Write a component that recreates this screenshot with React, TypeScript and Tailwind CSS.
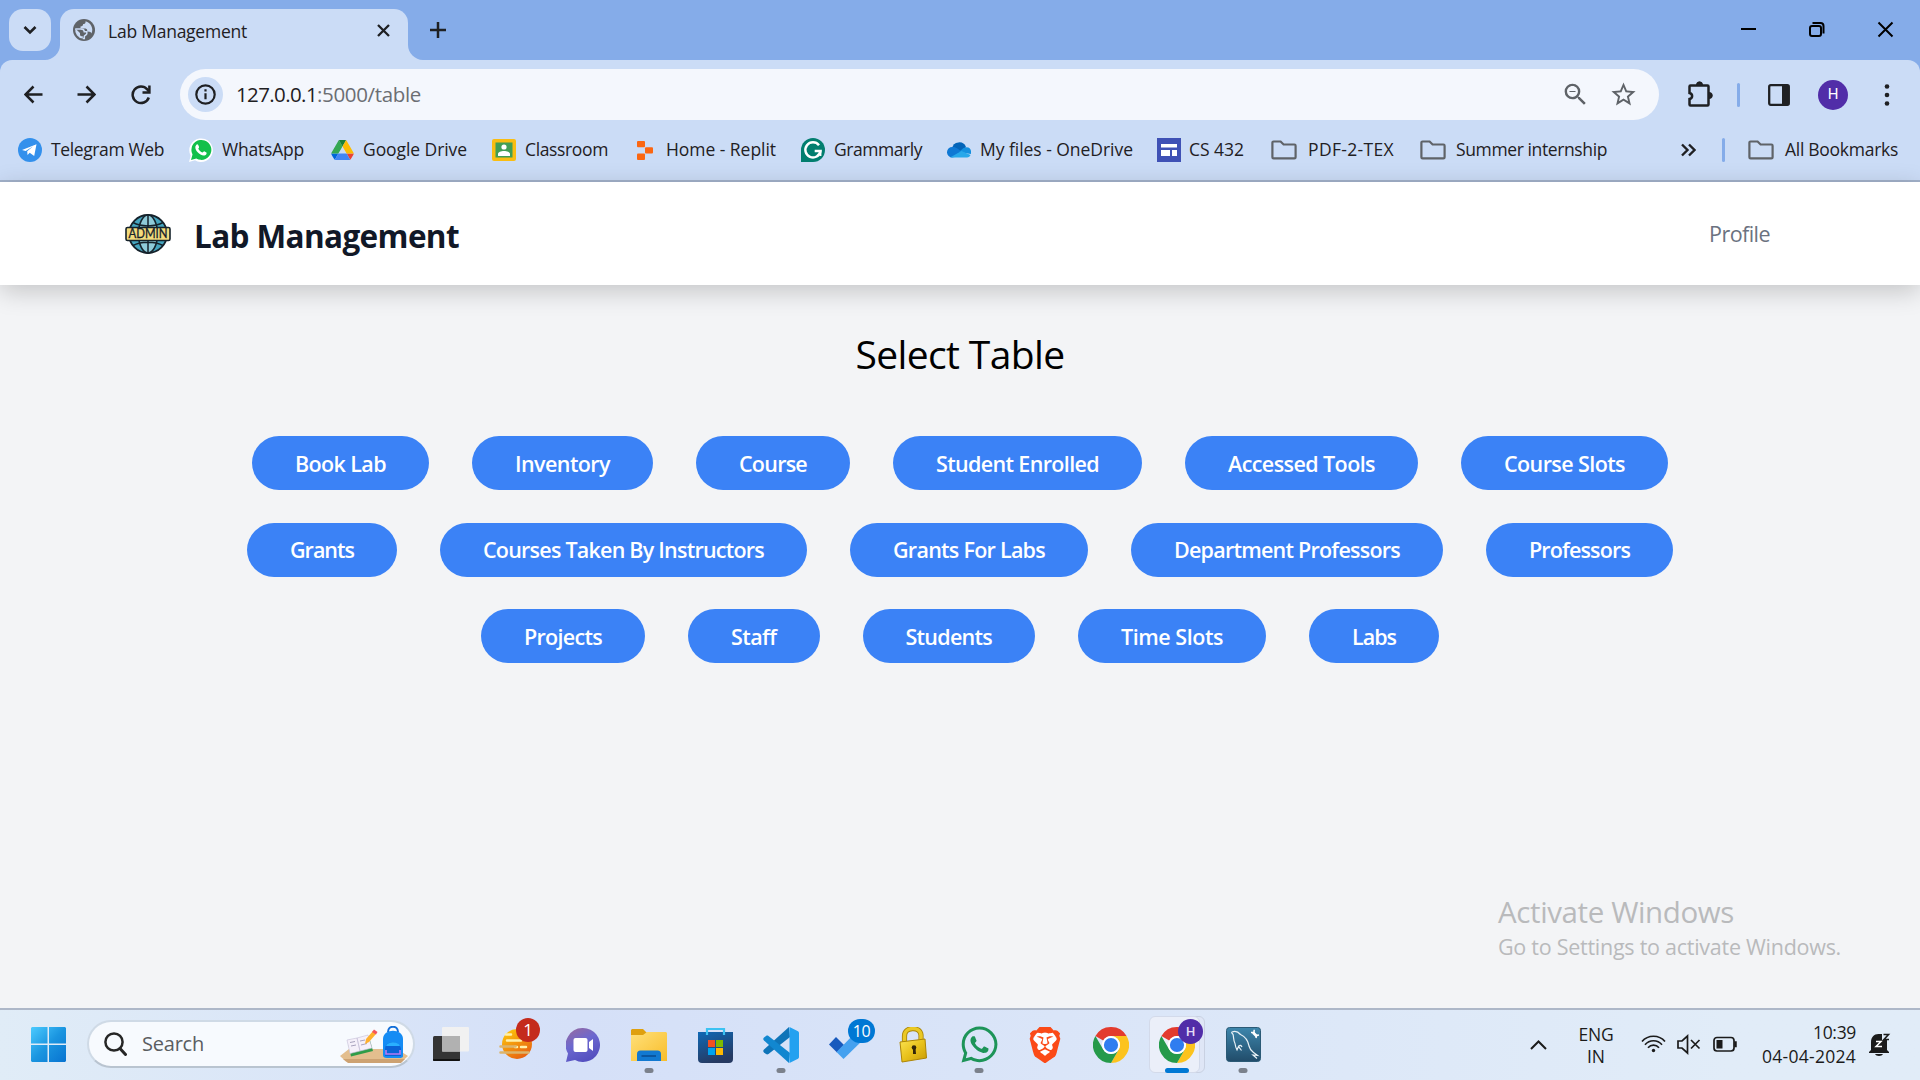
import { useLayoutEffect, useRef, useState, type ReactNode } from "react";
import { MdStarOutline, MdZoomOut } from "react-icons/md";
import { SiBrave } from "react-icons/si";
import { FaWhatsapp } from "react-icons/fa";

/** A line of text whose letter spacing is adjusted so that it fills `w` pixels. */
function Fit({ w, children, className = "" }: { w: number; children: string; className?: string }) {
  const ref = useRef<HTMLSpanElement>(null);
  const [spacing, setSpacing] = useState(0);
  useLayoutEffect(() => {
    const el = ref.current;
    if (!el) return;
    setSpacing((w - el.getBoundingClientRect().width) / children.length);
  }, [w, children]);
  return (
    <span ref={ref} className={"inline-block shrink-0 whitespace-pre " + className} style={{ letterSpacing: spacing }}>
      {children}
    </span>
  );
}

/* ---------- browser chrome ---------- */

const Globe = () => (
  <svg className="ml-[13px]" width="22" height="22" viewBox="0 0 22 22">
    <circle cx="11" cy="11" r="11" fill="#5f6368" />
    <path d="M12.500 2.300c.3 1.700-.7 2.700-2.300 2.700-.4 2-1.200 2.300-2.700 2.500v2h5c1.700.3 1.800 1.500 1.800 3l2.200.2c1 .2 1.500.8 2 1.700a8.800 8.800 0 0 0-6-12.100z" fill="#cbdcf6" />
    <path d="M2.300 9.500L7 14v1.500c0 1.500 1.300 1.800 2.800 1.800v2.300A8.800 8.800 0 0 1 2.300 9.500z" fill="#cbdcf6" />
    <path d="M2.300 10h5.500c2 0 3.500.7 3.500 2.700h2.500v2c-.5 1.700-2 1.300-2.500 2.600v2.300H9.800" fill="none" stroke="#cbdcf6" strokeWidth="1.500" />
  </svg>
);

function TabStrip() {
  return (
    <div className="flex h-[60px] bg-[#85ace9]">
      <div className="mt-[9px] ml-[9px] flex h-[42px] w-[42px] items-center justify-center rounded-[14px] bg-[#cbdcf6]">
        <svg width="14" height="10" viewBox="0 0 14 10" fill="none" stroke="#1f2023" strokeWidth="2.6">
          <path d="M1.500 2l5.500 5.500L12.500 2" />
        </svg>
      </div>
      <div className="relative mt-[9px] ml-[9px] flex h-[51px] w-[348px] items-center rounded-t-[14px] bg-[#cbdcf6] pb-[9px]">
        <svg className="absolute bottom-0 -left-[15px]" width="15" height="15" viewBox="0 0 15 15" fill="#cbdcf6">
          <path d="M15 0v15H0C8 15 15 8 15 0z" />
        </svg>
        <svg className="absolute -right-[15px] bottom-0" width="15" height="15" viewBox="0 0 15 15" fill="#cbdcf6">
          <path d="M0 0v15h15C7 15 0 8 0 0z" />
        </svg>
        <Globe />
        <Fit w={139} className="mt-[3px] ml-[13px] text-[17.500px] text-[#1f2023]">Lab Management</Fit>
        <svg className="ml-[130px]" width="13" height="13" viewBox="0 0 13 13" fill="none" stroke="#1f2023" strokeWidth="2.300">
          <path d="M1 1l11 11M12 1L1 12" />
        </svg>
      </div>
      <svg className="mt-[22px] ml-[22px]" width="16" height="16" viewBox="0 0 16 16" fill="none" stroke="#1f2023" strokeWidth="2.500">
        <path d="M8 0v16M0 8h16" />
      </svg>
      <svg className="mt-[20px] ml-auto" width="154" height="20" viewBox="0 0 154 20" fill="none" stroke="#000" strokeWidth="2">
        <path d="M1 9h15" />
        <rect x="70" y="6" width="11" height="10" rx="2" />
        <path d="M72.500 3h8a3 3 0 0 1 3 3v7.500" />
        <path d="M138.500 2.500l14 14M152.500 2.500l-14 14" />
      </svg>
      <div className="w-[26px]" />
    </div>
  );
}

function Toolbar() {
  return (
    <div className="flex h-[69px] items-center bg-[#cbdcf6]">
      <svg className="ml-[24px]" width="19" height="19" viewBox="0 0 19 19" fill="none" stroke="#1f2023" strokeWidth="2.500">
        <path d="M18.500 9.500H2M9.500 1.500l-8 8 8 8" />
      </svg>
      <svg className="ml-[34px]" width="19" height="19" viewBox="0 0 19 19" fill="none" stroke="#1f2023" strokeWidth="2.500">
        <path d="M.5 9.500H17M9.500 1.500l8 8-8 8" />
      </svg>
      <svg className="ml-[35px]" width="20" height="20" viewBox="0 0 20 20" fill="none" stroke="#1f2023" strokeWidth="2.500">
        <path d="M17.800 12.500A8.300 8.300 0 1 1 16.300 4.400L18 6.500" />
        <path d="M18.400 .5v7H11.500" />
      </svg>
      <div className="ml-[29px] flex h-[51px] w-[1479px] items-center rounded-full bg-[#f4f7fd]">
        <div className="ml-[8px] flex h-[35px] w-[35px] items-center justify-center rounded-full bg-[#cbdcf6]">
          <svg width="21" height="21" viewBox="0 0 21 21" fill="none" stroke="#1f2023" strokeWidth="2.200">
            <circle cx="10.500" cy="10.500" r="9.200" />
            <path d="M10.500 9.200v6M10.500 5.200v2.300" />
          </svg>
        </div>
        <Fit w={81} className="ml-[13px] text-[20.500px] text-[#1f2023]">127.0.0.1</Fit>
        <Fit w={104} className="text-[20.500px] text-[#6b6e73]">:5000/table</Fit>
        <MdZoomOut size={29} color="#5f6368" className="ml-auto" />
        <MdStarOutline size={29} color="#5f6368" className="mr-[21px] ml-[19px]" />
      </div>
      <svg className="ml-[28px]" width="27" height="27" viewBox="0 0 27 27" fill="none" stroke="#1f2023" strokeWidth="2.500">
        <path d="M3.500 4.500h17a1 1 0 0 1 1 1v18a1 1 0 0 1-1 1h-17a1 1 0 0 1-1-1v-5.500c3.500-.8 3.500-5.200 0-6V5.500a1 1 0 0 1 1-1z" />
        <path d="M9.500 3.800a3 3 0 0 1 6 0zM22.300 11.500a3 3 0 0 1 0 6z" fill="#1f2023" strokeWidth="1" />
      </svg>
      <div className="ml-[23px] h-[24px] w-[3px] rounded bg-[#85ace9]" />
      <svg className="ml-[28px]" width="22" height="22" viewBox="0 0 22 22" fill="none" stroke="#1f2023" strokeWidth="2.300">
        <rect x="1.200" y="1.200" width="19.600" height="19.600" rx="1.500" />
        <path d="M14 1h7v20h-7z" fill="#1f2023" stroke="none" />
      </svg>
      <div className="ml-[28px] flex h-[30px] w-[30px] items-center justify-center rounded-full bg-[#512da8] font-[Roboto] text-[15px] text-white">H</div>
      <svg className="ml-[36px]" width="6" height="22" viewBox="0 0 6 22" fill="#1f2023">
        <circle cx="3" cy="2.500" r="2.300" />
        <circle cx="3" cy="11" r="2.300" />
        <circle cx="3" cy="19.500" r="2.300" />
      </svg>
    </div>
  );
}

const Folder = () => (
  <svg width="26" height="20" viewBox="0 0 26 20" fill="none" stroke="#5f6368" strokeWidth="2.200">
    <path d="M2.600 1.500h7l3 3h10.800a1.200 1.200 0 0 1 1.200 1.200v11.500a1.200 1.200 0 0 1-1.200 1.200H2.600a1.200 1.200 0 0 1-1.200-1.200V2.700a1.200 1.200 0 0 1 1.200-1.200z" />
  </svg>
);

const Telegram = () => (
  <svg width="24" height="24" viewBox="0 0 24 24">
    <circle cx="12" cy="12" r="12" fill="#3390ec" />
    <path d="M4 12L18.500 6.200 16.200 18l-4.500-3.200-2.200 2.200-.3-3.800 6-5-7.500 4.700z" fill="#fff" />
  </svg>
);

const WhatsAppSmall = () => (
  <svg width="24" height="24" viewBox="0 0 24 24">
    <path d="M0 24l1.700-6.200A11.800 11.800 0 1 1 6 22.300z" fill="#fff" />
    <path d="M2 22l1.500-5.500A10 10 0 1 1 7.300 20.500z" fill="#12c04b" />
    <path d="M7.200 7c.6-1 1.500-1 1.900-.2l1 2.300c.1.500-.8 1.400-.8 1.700.9 1.900 2.300 3 4.200 3.800.5 0 1.200-1.500 1.700-1.300l2.200 1.100c.6.500-.1 2.300-1.200 2.800-4.300 1.600-10.700-4.500-9.800-8.600z" fill="#fff" />
  </svg>
);

const Drive = () => (
  <svg width="23" height="20" viewBox="0 0 87.300 78">
    <path d="M6.600 66.850l3.850 6.650c.8 1.400 1.950 2.500 3.300 3.300L27.500 53H0c0 1.550.4 3.100 1.200 4.500z" fill="#0066da" />
    <path d="M43.650 25L29.900 1.200c-1.350.8-2.500 1.900-3.300 3.300L1.200 48.500A9 9 0 0 0 0 53h27.500z" fill="#34a853" />
    <path d="M73.550 76.800c1.350-.8 2.500-1.900 3.300-3.300l9.250-16a9 9 0 0 0 1.200-4.500H59.800z" fill="#ea4335" />
    <path d="M43.650 25L57.400 1.200C56.050.4 54.500 0 52.900 0H34.400c-1.600 0-3.150.45-4.500 1.200z" fill="#188038" />
    <path d="M59.800 53H27.500L13.750 76.800c1.350.8 2.900 1.200 4.500 1.200h50.800c1.600 0 3.150-.45 4.500-1.200z" fill="#4285f4" />
    <path d="M73.400 26.500l-12.700-22c-.8-1.400-1.950-2.500-3.300-3.300L43.650 25l16.150 28h27.450c0-1.550-.4-3.100-1.200-4.500z" fill="#fbbc04" />
  </svg>
);

const Classroom = () => (
  <svg width="24" height="22" viewBox="0 0 24 22">
    <rect width="24" height="22" rx="2" fill="#f9bd12" />
    <rect x="3.500" y="3.500" width="17" height="15" fill="#419e55" />
    <circle cx="12" cy="8" r="2.600" fill="#fff" />
    <path d="M6 17v-2c0-4 12-4 12 0v2z" fill="#fff" />
  </svg>
);

const Replit = () => (
  <svg width="16" height="19" viewBox="0 0 16 19" fill="#fb6611">
    <rect width="8" height="6.300" rx="1" />
    <rect x="8" y="6.300" width="8" height="6.300" rx="1" />
    <rect y="12.600" width="8" height="6.300" rx="1" />
  </svg>
);

const Grammarly = () => (
  <svg width="24" height="24" viewBox="0 0 24 24" fill="none">
    <path d="M12 0a12 12 0 0 1 0 24H0V12A12 12 0 0 1 12 0z" fill="#027e6f" />
    <path d="M18 7.200A7.600 7.600 0 1 0 19.500 13h-5.800" stroke="#fff" strokeWidth="2.500" />
    <path d="M19.500 13v5" stroke="#fff" strokeWidth="1.800" />
  </svg>
);

const OneDrive = () => (
  <svg width="24" height="16" viewBox="0 0 24 16">
    <path d="M5 6.500A7.300 7.300 0 0 1 19 5l-5 6z" fill="#0364b8" />
    <path d="M5 15.500A5 5 0 0 1 5.500 5c3-.5 5 1.500 14 8z" fill="#0f78d4" />
    <path d="M12 10l4.500-4c6-2.500 8.500 2 7.300 6z" fill="#1490df" />
    <path d="M3 15.500L14.500 9 23.500 13c-.6 1.600-1.800 2.500-3.500 2.500z" fill="#28a8ea" />
  </svg>
);

const Sites = () => (
  <svg width="24" height="24" viewBox="0 0 24 24">
    <path d="M0 0h24v24H0z" fill="#3f51b5" />
    <path d="M4 6h16v3.500H4zM4 12h9v6H4zM15 12h5v6h-5z" fill="#fff" />
  </svg>
);

const BOOKMARKS: { icon: ReactNode; label: string; width: number; gap: string; before: string }[] = [
  { icon: <Telegram />, label: "Telegram Web", width: 113, gap: "ml-[9px]", before: "ml-[18px]" },
  { icon: <WhatsAppSmall />, label: "WhatsApp", width: 82, gap: "ml-[9px]", before: "ml-[25px]" },
  { icon: <Drive />, label: "Google Drive", width: 104, gap: "ml-[9px]", before: "ml-[27px]" },
  { icon: <Classroom />, label: "Classroom", width: 83, gap: "ml-[9px]", before: "ml-[25px]" },
  { icon: <Replit />, label: "Home - Replit", width: 110, gap: "ml-[13px]", before: "ml-[29px]" },
  { icon: <Grammarly />, label: "Grammarly", width: 88, gap: "ml-[9px]", before: "ml-[25px]" },
  { icon: <OneDrive />, label: "My files - OneDrive", width: 153, gap: "ml-[9px]", before: "ml-[25px]" },
  { icon: <Sites />, label: "CS 432", width: 55, gap: "ml-[8px]", before: "ml-[24px]" },
  { icon: <Folder />, label: "PDF-2-TEX", width: 86, gap: "ml-[11px]", before: "ml-[27px]" },
  { icon: <Folder />, label: "Summer internship", width: 151, gap: "ml-[10px]", before: "ml-[26px]" },
];

function Bookmarks() {
  return (
    <div className="flex h-[53px] items-center border-b-2 border-[#a3b2cb] bg-[#cbdcf6] pb-[9px] text-[17.500px] text-[#1f2023]">
      {BOOKMARKS.map((b) => (
        <div key={b.label} className={"flex items-center " + b.before}>
          {b.icon}
          <Fit w={b.width} className={"-mt-px " + b.gap}>{b.label}</Fit>
        </div>
      ))}
      <svg className="ml-auto" width="15" height="14" viewBox="0 0 15 14" fill="none" stroke="#1f2023" strokeWidth="2.400">
        <path d="M1 1.500L6.500 7 1 12.500M8 1.500L13.500 7 8 12.500" />
      </svg>
      <div className="ml-[26px] h-[24px] w-[3px] rounded bg-[#85ace9]" />
      <div className="mr-[22px] ml-[23px] flex items-center">
        <Folder />
        <Fit w={113} className="-mt-px ml-[11px]">All Bookmarks</Fit>
      </div>
    </div>
  );
}

/* ---------- page ---------- */

const AdminGlobe = () => (
  <svg width="46" height="42" viewBox="0 0 46 42" fill="none" stroke="#15222b">
    <circle cx="23" cy="21" r="19" fill="#45a5bf" strokeWidth="1.800" />
    <ellipse cx="23" cy="21" rx="9.500" ry="19" fill="#8fcbd9" strokeWidth="1.600" />
    <path d="M23 2v38M8 9.500c8 4.500 22 4.500 30 0M8 32.500c8-4.500 22-4.500 30 0" strokeWidth="1.500" />
    <rect x="1" y="14.500" width="44" height="13" rx="1.500" fill="#f3dc7c" strokeWidth="1.600" />
    <text x="3.500" y="25.300" textLength="39" lengthAdjust="spacingAndGlyphs" fontFamily="Lato, sans-serif" fontSize="12.500" fontWeight="400" fill="#15222b" stroke="#15222b" strokeWidth=".3">ADMIN</text>
  </svg>
);

const ROWS: { label: string; width: number }[][] = [
  [
    { label: "Book Lab", width: 91 },
    { label: "Inventory", width: 95 },
    { label: "Course", width: 68 },
    { label: "Student Enrolled", width: 163 },
    { label: "Accessed Tools", width: 147 },
    { label: "Course Slots", width: 121 },
  ],
  [
    { label: "Grants", width: 64 },
    { label: "Courses Taken By Instructors", width: 281 },
    { label: "Grants For Labs", width: 152 },
    { label: "Department Professors", width: 226 },
    { label: "Professors", width: 101 },
  ],
  [
    { label: "Projects", width: 78 },
    { label: "Staff", width: 45.5 },
    { label: "Students", width: 86.5 },
    { label: "Time Slots", width: 102 },
    { label: "Labs", width: 44 },
  ],
];

function Page() {
  return (
    <main className="relative flex h-[826px] flex-col bg-[#f3f4f6]">
      <header className="flex h-[103px] items-center bg-white pr-[150px] pl-[125px] shadow-[0_6px_24px_rgba(0,0,0,0.2)]">
        <AdminGlobe />
        <Fit w={265} className="mt-[4px] ml-[23px] text-[31.500px] font-bold text-[#111827]">Lab Management</Fit>
        <Fit w={61} className="mt-[2px] ml-auto text-[21.500px] text-[#6b7280]">Profile</Fit>
      </header>
      <h1 className="mt-[39px] flex h-[60px] items-center justify-center text-[39px] text-black">
        <Fit w={209}>Select Table</Fit>
      </h1>
      <div className="mt-[52px] flex flex-col gap-[32.500px]">
        {ROWS.map((row, i) => (
          <div key={i} className="flex justify-center gap-[43px]">
            {row.map((b) => (
              <button key={b.label} className="flex h-[54px] items-center rounded-full bg-[#3b82f6] px-[43px] pt-[2px] text-[21.500px] font-semibold text-white">
                <Fit w={b.width}>{b.label}</Fit>
              </button>
            ))}
          </div>
        ))}
      </div>
      <aside className="absolute top-[708px] left-[1498px] flex flex-col items-start text-[#b9babc]">
        <Fit w={236} className="text-[29.500px] leading-[44px]">Activate Windows</Fit>
        <Fit w={343} className="text-[21.500px] leading-[26px]">Go to Settings to activate Windows.</Fit>
      </aside>
    </main>
  );
}

/* ---------- taskbar ---------- */

const WindowsLogo = () => (
  <svg width="35" height="35" viewBox="0 0 35 35">
    <defs>
      <linearGradient id="win" x1="0" y1="0" x2="1" y2="1" gradientUnits="objectBoundingBox">
        <stop offset="0" stopColor="#4ccbff" />
        <stop offset=".5" stopColor="#1a95e0" />
        <stop offset="1" stopColor="#0873d0" />
      </linearGradient>
    </defs>
    <path d="M1 0h15.500v16.500H0V1zM18 0h16l1 1v15.500H18zM0 18h16.500v17H1l-1-1zM18 18h17v16l-1 1H18z" fill="url(#win)" />
  </svg>
);

const SearchArt = () => (
  <svg width="68" height="38" viewBox="0 0 68 38">
    <path d="M0 30l9-7h48l11 7-6 5.500H6z" fill="#e3be8e" />
    <path d="M3 33h62l-4 4H8z" fill="#cda272" />
    <path d="M8 16l21-5 4 14-22 5.500z" fill="#2f9c48" />
    <path d="M7 14l10-2 3 13-10 2.500zM17 12l11-3 4 13-12 3z" fill="#f5f0fa" stroke="#c5bed6" strokeWidth=".6" />
    <path d="M10 16.500l5-1M11 20l5-1M20 15l5-1M21 19l6-1.500" stroke="#a8a2bd" />
    <path d="M25 18l1-5 7-8 3 3-7 8z" fill="#ffb02e" />
    <path d="M32 6l2-2.500 3.500 2.500L36 8.500z" fill="#f4545d" />
    <path d="M48 6c0-7 10-7 10 0" fill="none" stroke="#146fd8" strokeWidth="2" />
    <path d="M43 13c0-11 20-11 20 0v17c0 2-3 2-4 2H47c-3 0-4-1-4-3z" fill="#158cf4" />
    <path d="M45 23c0-9 15-9 16 0v7H45z" fill="#0b63d6" />
    <path d="M46 20c2-5 12-5 14 0z" fill="#29b0ff" />
    <path d="M46 24v4h14v-4" fill="none" stroke="#b77bf3" strokeWidth="1.600" />
  </svg>
);

const TaskView = () => (
  <svg width="36" height="35" viewBox="0 0 36 35">
    <rect y="9" width="27" height="25" rx="1.500" fill="#343434" />
    <path d="M0 32h27v1.500l-1 .5H1l-1-.5z" fill="#111" />
    <rect x="9" width="27" height="24.500" rx="1" fill="#f1f1f1" />
    <path d="M9 9h18v15.500H9z" fill="#b1b1b1" />
  </svg>
);

const News = () => (
  <svg width="36" height="36" viewBox="0 0 36 36">
    <defs>
      <linearGradient id="sun" x1="0" y1="0" x2=".6" y2="1">
        <stop offset="0" stopColor="#ffcf0a" />
        <stop offset="1" stopColor="#e86410" />
      </linearGradient>
    </defs>
    <circle cx="18" cy="17" r="15" fill="url(#sun)" />
    <path d="M7 7.500h5M8 13.500h14M16 20h2M22 20h5" stroke="#fff0a8" strokeWidth="2.500" strokeLinecap="round" />
    <path d="M1.500 19.500h15M1.500 25.500h28" stroke="#dcb46b" strokeWidth="2.500" strokeLinecap="round" />
  </svg>
);

const Chat = () => (
  <svg width="34" height="34" viewBox="0 0 34 34">
    <defs>
      <linearGradient id="chat" x1="0" y1="0" x2=".5" y2="1">
        <stop offset="0" stopColor="#9a6a9c" />
        <stop offset=".5" stopColor="#6c68cf" />
        <stop offset="1" stopColor="#5550c0" />
      </linearGradient>
    </defs>
    <path d="M17 0a17 17 0 1 1-8 32L0 34l2-8.500A17 17 0 0 1 17 0z" fill="url(#chat)" />
    <rect x="7.500" y="10" width="14" height="14" rx="2" fill="#fff" />
    <path d="M23 14l4-3v12l-4-3z" fill="#fff" />
  </svg>
);

const Explorer = () => (
  <svg width="36" height="34" viewBox="0 0 36 34">
    <defs>
      <linearGradient id="fold" x1="0" y1="0" x2="1" y2="1">
        <stop offset="0" stopColor="#ffe07a" />
        <stop offset="1" stopColor="#f8bd2a" />
      </linearGradient>
    </defs>
    <path d="M0 2l1-1h11l4 4-3 4H0z" fill="#dfa00f" />
    <path d="M0 7h12l4-3h19l1 1v28H0z" fill="url(#fold)" />
    <path d="M6 33v-7a3.500 3.500 0 0 1 3.500-3.500h17A3.500 3.500 0 0 1 30 26v7z" fill="#1279d1" />
    <path d="M10.500 28h14.500" stroke="#0a56a0" strokeWidth="2" />
  </svg>
);

const Store = () => (
  <svg width="35" height="36" viewBox="0 0 35 36">
    <defs>
      <linearGradient id="store" x1="0" y1="0" x2=".4" y2="1">
        <stop offset="0" stopColor="#0f69b6" />
        <stop offset="1" stopColor="#263a62" />
      </linearGradient>
    </defs>
    <path d="M0 5h35v27a4 4 0 0 1-4 4H4a4 4 0 0 1-4-4z" fill="url(#store)" />
    <path d="M9 8V2h17v6" fill="none" stroke="#3cc2f2" strokeWidth="2.200" />
    <path d="M10 13h7v7h-7z" fill="#f25022" />
    <path d="M18 13h7v7h-7z" fill="#7fba00" />
    <path d="M10 21h7v7h-7z" fill="#00a4ef" />
    <path d="M18 21h7v7h-7z" fill="#ffb900" />
  </svg>
);

const VSCode = () => (
  <svg width="36" height="36" viewBox="0 0 36 36">
    <path d="M26 0L1 22.500c-1 1-1 2 0 3L3 27c1 .6 1.500.5 2.500 0L27 10z" fill="#0f74b8" />
    <path d="M26 36L1 13.500c-1-1-1-2 0-3L3 9c1-.6 1.500-.5 2.500 0L27 26z" fill="#1287d0" />
    <path d="M26.500 0L35 4.200c.7.400 1 .9 1 1.700v24.200c0 .8-.3 1.300-1 1.700L26.500 36z" fill="#23a1f0" />
  </svg>
);

const Todo = () => (
  <svg width="36" height="36" viewBox="0 0 36 36">
    <path d="M0 17.500l7-7.500 8 8-7 7.500z" fill="#185abd" />
    <path d="M7.500 25L28 4l8 7-21.500 21z" fill="#45a1ef" />
  </svg>
);

const Lock = () => (
  <svg width="28" height="36" viewBox="0 0 28 36">
    <defs>
      <linearGradient id="gold" x1="0" y1="0" x2="1" y2="1">
        <stop offset="0" stopColor="#fbe453" />
        <stop offset=".5" stopColor="#e9c21b" />
        <stop offset="1" stopColor="#c79a05" />
      </linearGradient>
    </defs>
    <path d="M5.500 16V9c0-9.500 15.500-10 16.500-1v7" fill="none" stroke="#a98408" strokeWidth="5.200" />
    <path d="M5.500 16V9c0-9.500 15.500-10 16.500-1v7" fill="none" stroke="#eac824" strokeWidth="3.500" />
    <path d="M1 15l25-3 1.500 19L3 35z" fill="url(#gold)" stroke="#ad8505" />
    <circle cx="15" cy="20.500" r="2.300" fill="#33270a" />
    <path d="M14 21h2.500l.5 6h-3z" fill="#33270a" />
  </svg>
);

const Brave = () => (
  <span className="relative block h-[36px] w-[36px]">
    <svg className="absolute inset-0" width="36" height="36" viewBox="0 0 36 36">
      <path d="M9 6h18l3 8-3 13-9 6-9-6-3-13z" fill="#fff" />
    </svg>
    <SiBrave size={36} color="#fb4a17" className="absolute inset-0" />
  </span>
);

const Chrome = () => (
  <svg width="36" height="36" viewBox="0 0 36 36">
    <path d="M2.410 9A18 18 0 0 1 33.590 9H18a9 9 0 0 0-7.800 4.500z" fill="#e33b2e" />
    <path d="M33.590 9A18 18 0 0 1 18 36l7.800-13.500A9 9 0 0 0 18 9z" fill="#fcc31e" />
    <path d="M18 36A18 18 0 0 1 2.410 9l7.800 13.500A9 9 0 0 0 25.800 22.500z" fill="#259a4a" />
    <circle cx="18" cy="18" r="9" fill="#fff" />
    <circle cx="18" cy="18" r="7.100" fill="#2f7df0" />
  </svg>
);

const Workbench = () => (
  <svg width="35" height="35" viewBox="0 0 35 35" fill="none">
    <defs>
      <linearGradient id="wb" x1="0" y1="0" x2="0" y2="1">
        <stop offset="0" stopColor="#3d86ac" />
        <stop offset="1" stopColor="#214c6a" />
      </linearGradient>
    </defs>
    <rect x=".5" y=".5" width="34" height="34" rx="3" fill="url(#wb)" stroke="#2b5a76" />
    <path d="M6 5c3-1.500 6-.5 8.500 2.500 4.500 2 7.500 6 8.500 11.500.7 3 2.500 5 4.500 6.500l4 3-4.500-.5 4 3.500" stroke="#e8f1f6" strokeWidth="1.200" />
    <path d="M6 5c-1 .8.800 1.500 1.200 3 .5 3 .3 6 1.800 8.500.3 2 .8 4.500 2 6.500l1.500-3.500 3 4M13 19c1-1 2-1 3 1" stroke="#e8f1f6" strokeWidth="1.200" />
    <path d="M27 5.500l4 4" stroke="#fff" strokeWidth="2.600" />
    <path d="M25 5.500l3-.2.200-2.500M30 11l.5-2.500 2.500-.5" stroke="#fff" strokeWidth="1.500" />
  </svg>
);

function Dot() {
  return <span className="absolute bottom-[7px] left-1/2 h-[5px] w-[9px] -translate-x-1/2 rounded-full bg-[#7b818c]" />;
}

function App({ children }: { children: ReactNode }) {
  return <div className="relative flex h-[70px] w-[66px] shrink-0 items-center justify-center pb-[1px]">{children}</div>;
}

function Taskbar() {
  return (
    <footer className="flex h-[72px] items-center border-t-2 border-[#adb7c8] bg-linear-to-r from-[#e0ecf7] from-0% via-[#d5e0f8] via-30% to-[#e1ecf8] to-90% text-[#1b1b1b]">
      <div className="ml-[31px] shrink-0 pb-[1px]">
        <WindowsLogo />
      </div>
      <div className="mb-[2px] ml-[21px] flex h-[48px] w-[328px] shrink-0 items-center rounded-full border-2 border-[#cfdae6] border-b-[#b9c4d0] bg-[#f7fafe] pl-[15px]">
        <svg width="23" height="24" viewBox="0 0 23 24" fill="none" stroke="#262626" strokeWidth="2.500">
          <circle cx="10" cy="10" r="8.600" />
          <path d="M16 16.500l5.500 6" strokeWidth="3" strokeLinecap="round" />
        </svg>
        <Fit w={62} className="ml-[15px] text-[20px] text-[#5a5d61]">Search</Fit>
        <div className="mt-[2px] mr-[5px] ml-auto">
          <SearchArt />
        </div>
      </div>
      <div className="ml-[3px] flex">
        <App><TaskView /></App>
        <App>
          <News />
          <span className="absolute top-[8px] left-[32px] flex h-[24px] w-[24px] items-center justify-center rounded-full bg-[#c42b1c] text-[17px] text-white">1</span>
        </App>
        <App><Chat /></App>
        <App><Explorer /><Dot /></App>
        <App><Store /></App>
        <App><VSCode /><Dot /></App>
        <App>
          <Todo />
          <span className="absolute top-[9px] left-[34px] flex h-[24px] w-[27px] items-center justify-center rounded-full bg-[#0078d4] text-[16px] tracking-tight text-white">10</span>
        </App>
        <App><Lock /></App>
        <App><FaWhatsapp size={41} color="#1d9458" /><Dot /></App>
        <App><Brave /></App>
        <App><Chrome /></App>
        <App>
          <span className="absolute top-[6px] left-[12px] h-[57px] w-[49px] rounded-[6px] border border-[#c9d1e2] bg-[#dfe6f6]" />
          <span className="absolute top-[6px] left-[5px] h-[57px] w-[51px] rounded-[6px] border border-[#d3daea] bg-[#ebeff9]" />
          <span className="relative"><Chrome /></span>
          <span className="absolute top-[9px] left-[34px] flex h-[25px] w-[25px] items-center justify-center rounded-full bg-[#512da8] font-[Roboto] text-[13px] font-medium text-[#e5dcf5]">H</span>
          <span className="absolute bottom-[7px] left-[21px] h-[5px] w-[24px] rounded-full bg-[#0078d4]" />
        </App>
        <App><Workbench /><Dot /></App>
      </div>
      <svg className="mr-[31px] ml-auto shrink-0" width="17" height="10" viewBox="0 0 17 10" fill="none" stroke="#1b1b1b" strokeWidth="2">
        <path d="M1 9l7.500-7.500L16 9" />
      </svg>
      <div className="flex w-[36px] flex-col items-center pb-[1px] text-[17.500px] leading-[22px]">
        <Fit w={35}>ENG</Fit>
        <Fit w={18}>IN</Fit>
      </div>
      <svg className="mb-[3px] ml-[27px] shrink-0" width="96" height="24" viewBox="0 0 96 24" fill="none" stroke="#1b1b1b" strokeWidth="1.700">
        <path d="M1 9.500c6-7 17-7 23 0" />
        <path d="M4 12.700c4.500-5.300 12.500-5.300 17 0" />
        <path d="M7 15.700c3-3.500 8-3.500 11 0" />
        <circle cx="12.500" cy="18.500" r="1.700" fill="#1b1b1b" stroke="none" />
        <path d="M37 9h4l5.500-5v17L41 16h-4zM50 8l8.500 8.500M58.500 8L50 16.500" />
        <rect x="73" y="5.500" width="20" height="13.500" rx="3" />
        <path d="M75.500 8h6v8.500h-6z" fill="#1b1b1b" stroke="none" />
        <path d="M94 10h1v4.500h-1z" strokeWidth="1.500" />
      </svg>
      <div className="ml-[25px] flex w-[94px] flex-col items-end pb-[3px] text-[17.500px] leading-[24px]">
        <Fit w={43}>10:39</Fit>
        <Fit w={94}>04-04-2024</Fit>
      </div>
      <svg className="mr-[29px] mb-[1px] ml-[13px] shrink-0" width="22" height="24" viewBox="0 0 22 24">
        <path d="M2 17V9.500C2 4 5 1 9.500 1H13v6h5v10l2 2v1H0v-1z" fill="#1b1b1b" />
        <path d="M6 21h8c-1 2.500-7 2.500-8 0z" fill="#1b1b1b" />
        <path d="M7 8.500h5L7 13.500h6" fill="none" stroke="#fff" strokeWidth="1.500" />
        <path d="M14.500 1.500h5l-4.500 5h5" fill="none" stroke="#1b1b1b" strokeWidth="1.600" />
      </svg>
    </footer>
  );
}

export default function Desktop() {
  return (
    <div className="flex h-[1080px] w-[1920px] flex-col overflow-hidden font-['Open_Sans','Noto_Sans',sans-serif]">
      <TabStrip />
      <div className="bg-[#85ace9]">
        <div className="overflow-hidden rounded-t-[12px]">
          <Toolbar />
          <Bookmarks />
        </div>
      </div>
      <Page />
      <Taskbar />
    </div>
  );
}
